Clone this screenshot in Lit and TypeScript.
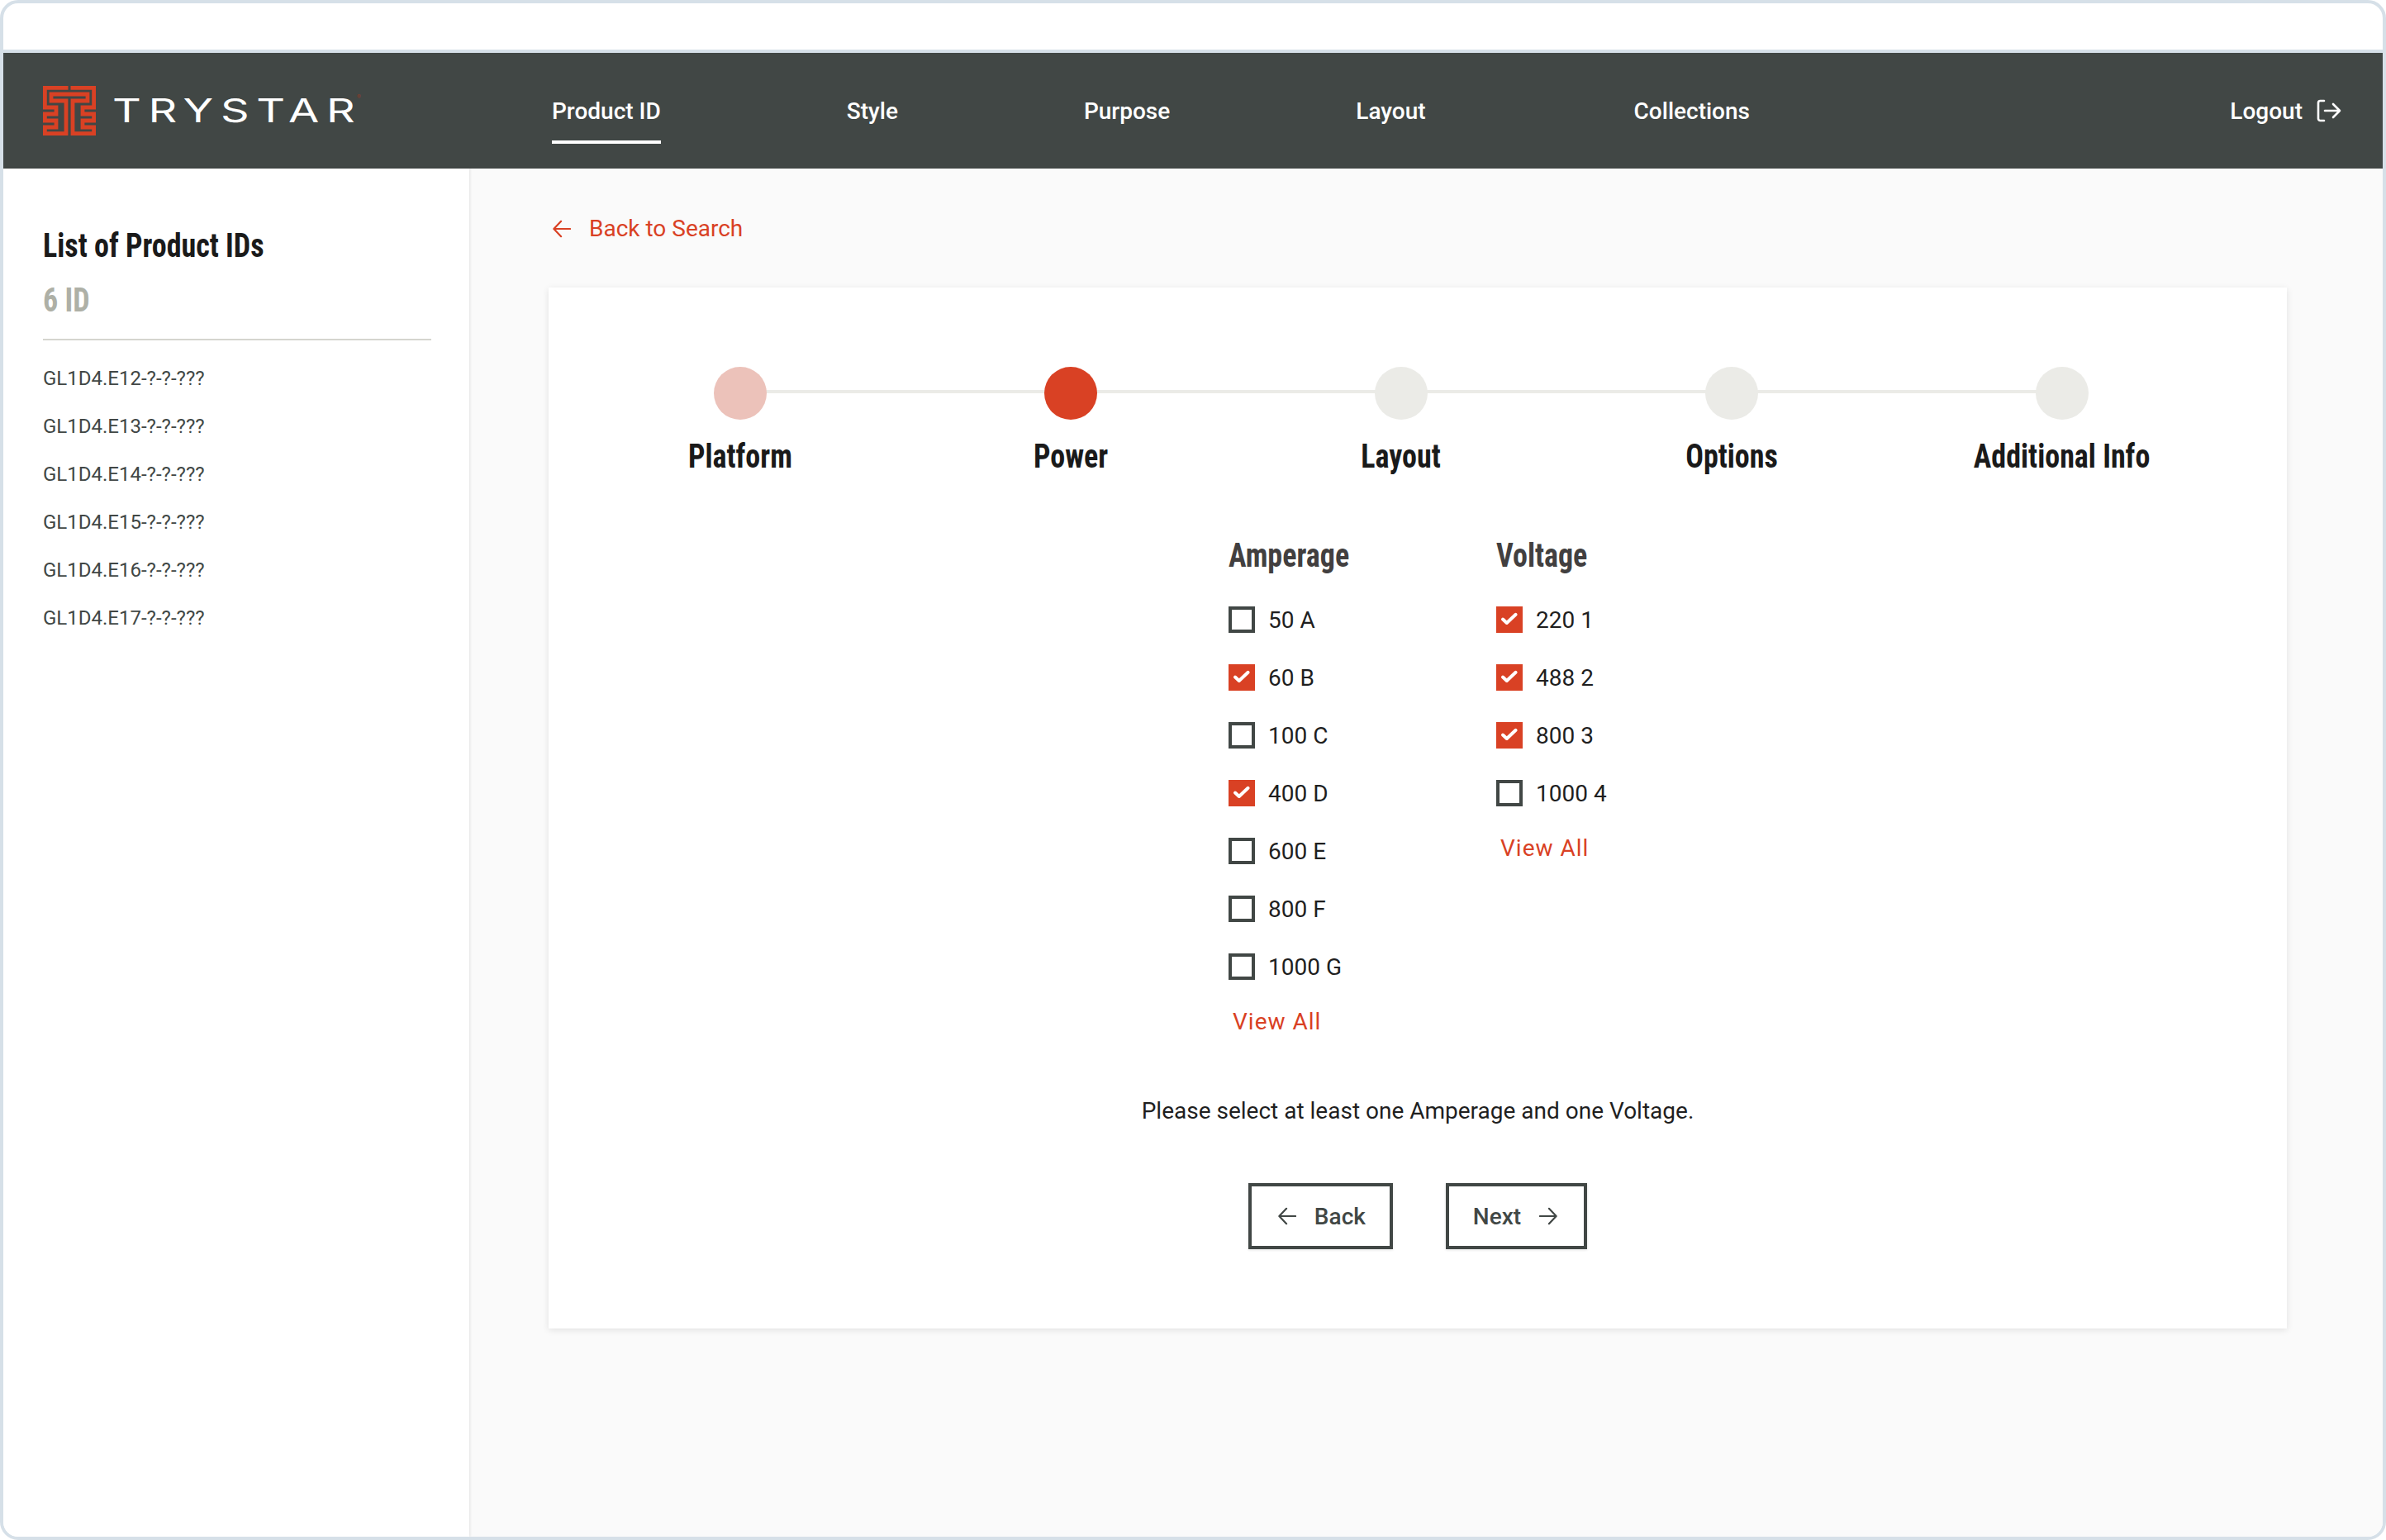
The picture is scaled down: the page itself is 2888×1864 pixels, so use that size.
import { LitElement, html, css, svg } from "lit";
import { customElement } from "lit/decorators.js";

const NAV = ["Product ID", "Style", "Purpose", "Layout", "Collections"];
const IDS = ["E12", "E13", "E14", "E15", "E16", "E17"];
const STEPS = [
  { label: "Platform", state: "done" },
  { label: "Power", state: "active" },
  { label: "Layout", state: "" },
  { label: "Options", state: "" },
  { label: "Additional Info", state: "" },
];
const AMPS: [string, boolean][] = [
  ["50 A", false], ["60 B", true], ["100 C", false], ["400 D", true],
  ["600 E", false], ["800 F", false], ["1000 G", false],
];
const VOLTS: [string, boolean][] = [
  ["220 1", true], ["488 2", true], ["800 3", true], ["1000 4", false],
];

const arrowLeft = html`<svg class="arrow" viewBox="0 0 24 24" fill="none" stroke="currentColor" stroke-width="2.4" stroke-linecap="round" stroke-linejoin="round"><path d="M23 12H2M11 2 1.5 12 11 22"/></svg>`;
const arrowRight = html`<svg class="arrow" viewBox="0 0 24 24" fill="none" stroke="currentColor" stroke-width="2.4" stroke-linecap="round" stroke-linejoin="round"><path d="M1 12h21M13 2l9.5 10L13 22"/></svg>`;

const logoPaths = svg`
  <path d="M30.5 2.4H2.4V26H16V34H2.4V42H16V50H2.4V57.6H28V18H10V10H54V18H36V57.6H61.6V50H48V42H61.6V34H48V26H61.6V2.4H33.5" fill="none" stroke="#d94124" stroke-width="4.8"/>
`;

@customElement("app-root")
export class AppRoot extends LitElement {
  static styles = css`
    :host { display: block; width: 2888px; height: 1864px; font-family: Roboto, sans-serif; background: #fff; }
    .frame { box-sizing: border-box; width: 2888px; height: 1864px; border: 4px solid #d6e0e8; border-radius: 22px; display: flex; flex-direction: column; overflow: hidden; background: #fff; }
    .top { height: 56px; flex: none; border-bottom: 4px solid #d6e0e8; box-sizing: content-box; }
    header { height: 140px; flex: none; background: #414745; color: #fff; display: flex; align-items: center; padding: 0 50px 0 48px; position: relative; }
    .logo { width: 64px; height: 60px; flex: none; }
    .wordbox { width: 294px; margin-left: 20px; flex: none; position: relative; height: 40px; }
    .word { display: block; font-family: Inter, sans-serif; font-size: 40px; font-weight: 400; letter-spacing: 6.4px; line-height: 40px; white-space: nowrap; transform: scaleX(1.35); transform-origin: left center; }
    .reg { position: absolute; left: 296px; top: 0; font-size: 7px; line-height: 8px; color: #8c3a2a; font-family: Inter, sans-serif; }
    nav { display: flex; gap: 225px; margin-left: 238px; flex: 1; height: 100%; }
    nav a { font-size: 28px; font-weight: 500; display: flex; align-items: center; height: 100%; box-sizing: border-box; position: relative; }
    nav a:last-child { margin-left: 27px; }
    nav a.on::after { content: ""; position: absolute; left: 0; right: 0; top: 106px; height: 4px; background: #fff; }
    .logout { font-size: 28px; font-weight: 500; display: flex; align-items: center; gap: 17px; }
    .logout svg { width: 30px; height: 28px; }
    .body { flex: 1; display: flex; min-height: 0; }
    aside { width: 564px; flex: none; box-sizing: border-box; padding: 70px 46px 0 48px; background: #fff; box-shadow: 1px 0 3px rgba(0,0,0,.1); position: relative; }
    .cond { font-family: "Liberation Sans Narrow", "Roboto Condensed", "Liberation Sans", sans-serif; font-weight: 700; white-space: nowrap; }
    .sq { display: block; transform: scaleX(.9); transform-origin: left center; }
    aside h2 { margin: 0; font-size: 40px; line-height: 48px; color: #1a1a1a; font-weight: 700; }
    aside .count { font-size: 40px; line-height: 48px; color: #aeb0a6; margin-top: 18px; padding-bottom: 22px; border-bottom: 2px solid #d5d5cf; }
    aside ul { list-style: none; margin: 30px 0 0; padding: 0; display: flex; flex-direction: column; gap: 26px; }
    aside li { font-size: 24px; line-height: 32px; color: #414745; }
    main { flex: 1; background: #fafafa; padding: 55px 0 0 96px; box-sizing: border-box; min-width: 0; }
    .back { display: flex; align-items: center; gap: 22px; color: #d94124; font-size: 28px; line-height: 36px; height: 36px; padding-left: 5px; }
    .back svg { width: 22px; height: 22px; }
    .card { width: 2104px; height: 1260px; margin: 53px 0 0 0; background: #fff; box-shadow: 0 2px 8px rgba(0,0,0,.1); box-sizing: border-box; padding: 96px 0 0 32px; }
    .steps { display: flex; width: 2000px; }
    .step { width: 400px; flex: none; display: flex; flex-direction: column; align-items: center; position: relative; }
    .step + .step::before { content: ""; position: absolute; left: -200px; width: 400px; top: 28px; height: 4px; background: #ebebe7; }
    .dot { width: 64px; height: 64px; border-radius: 50%; background: #ebebe7; position: relative; z-index: 1; }
    .step.done .dot { background: #ecc2ba; }
    .step.active .dot { background: #d94124; }
    .step .lab { font-size: 40px; line-height: 48px; color: #1a1a1a; margin-top: 21px; white-space: nowrap; transform: scaleX(.9); }
    .opts { display: flex; justify-content: center; margin: 72px 0 0 -32px; }
    .col:first-child { width: 324px; }
    .col:last-child { width: 134px; }
    .col h3 { margin: 0 0 37px; font-size: 40px; line-height: 48px; color: #423f3f; font-weight: 700; }
    .row { display: flex; align-items: center; height: 32px; margin-bottom: 38px; font-size: 28px; color: #1f1f1f; gap: 16px; white-space: nowrap; }
    .box { width: 32px; height: 32px; box-sizing: border-box; border: 4px solid #414745; flex: none; display: flex; }
    .box.on { background: #d94124; border-color: #d94124; }
    .box svg { width: 24px; height: 24px; }
    .all { color: #d94124; font-size: 28px; line-height: 32px; letter-spacing: 1px; margin: -3px 0 0 5px; }
    .msg { text-align: center; font-size: 28px; line-height: 36px; color: #1f1f1f; margin: 74px 0 0 -32px; }
    .btns { display: flex; justify-content: center; gap: 64px; margin: 69px 0 0 -32px; }
    .btn { height: 80px; box-sizing: border-box; border: 4px solid #414745; color: #414745; display: flex; align-items: center; gap: 22px; font-size: 28px; font-weight: 500; box-shadow: 0 1px 3px rgba(0,0,0,.12); }
    .btn.prev { padding: 0 29px 0 32px; }
    .btn.next { padding: 0 32px 0 29px; }
    .btn svg { width: 22px; height: 22px; }
  `;

  private check(on: boolean) {
    return html`<span class="box ${on ? "on" : ""}">${on
      ? html`<svg viewBox="0 0 24 24" fill="none" stroke="#fff" stroke-width="4" stroke-linecap="round" stroke-linejoin="round"><path d="M4 11.5 8.8 16 19.6 5.8"/></svg>`
      : ""}</span>`;
  }

  private col(title: string, rows: [string, boolean][]) {
    return html`<div class="col">
      <h3 class="cond sq">${title}</h3>
      ${rows.map(([t, on]) => html`<div class="row">${this.check(on)}<span>${t}</span></div>`)}
      <div class="all">View All</div>
    </div>`;
  }

  render() {
    return html`<div class="frame">
      <div class="top"></div>
      <header>
        <svg class="logo" viewBox="0 0 64 60">${logoPaths}</svg>
        <div class="wordbox"><span class="word">TRYSTAR</span><span class="reg">®</span></div>
        <nav>${NAV.map((n, i) => html`<a class=${i === 0 ? "on" : ""}>${n}</a>`)}</nav>
        <div class="logout">Logout
          <svg viewBox="0 0 30 28" fill="none" stroke="#fff" stroke-width="2.6" stroke-linecap="round" stroke-linejoin="round"><path d="M9 2H4.5A2.5 2.5 0 0 0 2 4.5v19A2.5 2.5 0 0 0 4.5 26H9M10 14h18M20 6l8 8-8 8"/></svg>
        </div>
      </header>
      <div class="body">
        <aside>
          <h2 class="cond sq">List of Product IDs</h2>
          <div class="count cond"><span class="sq">6 ID</span></div>
          <ul>${IDS.map((x) => html`<li>GL1D4.${x}-?-?-???</li>`)}</ul>
        </aside>
        <main>
          <div class="back">${arrowLeft}<span>Back to Search</span></div>
          <section class="card">
            <div class="steps">${STEPS.map((s) => html`<div class="step ${s.state}"><div class="dot"></div><div class="lab cond">${s.label}</div></div>`)}</div>
            <div class="opts">${this.col("Amperage", AMPS)}${this.col("Voltage", VOLTS)}</div>
            <div class="msg">Please select at least one Amperage and one Voltage.</div>
            <div class="btns">
              <div class="btn prev">${arrowLeft}<span>Back</span></div>
              <div class="btn next"><span>Next</span>${arrowRight}</div>
            </div>
          </section>
        </main>
      </div>
    </div>`;
  }
}
